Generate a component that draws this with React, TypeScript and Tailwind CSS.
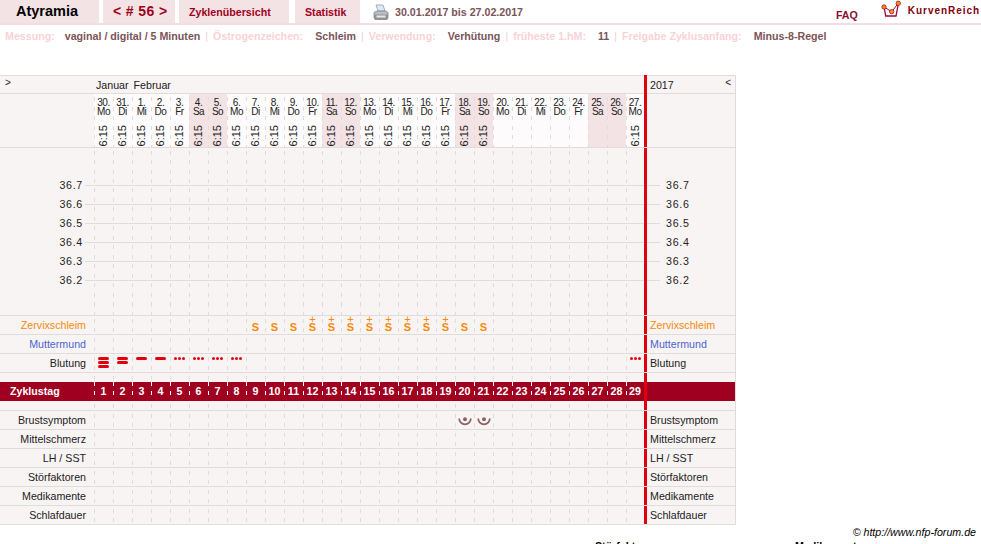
const DAYS = [
  "30.|Mo", "31.|Di", "1.|Mi", "2.|Do", "3.|Fr", "4.|Sa", "5.|So", "6.|Mo", "7.|Di", "8.|Mi",
  "9.|Do", "10.|Fr", "11.|Sa", "12.|So", "13.|Mo", "14.|Di", "15.|Mi", "16.|Do", "17.|Fr", "18.|Sa",
  "19.|So", "20.|Mo", "21.|Di", "22.|Mi", "23.|Do", "24.|Fr", "25.|Sa", "26.|So", "27.|Mo",
];
const INDEXES = DAYS.map((_, i) => i);
const TEMPS = ["36.7", "36.6", "36.5", "36.4", "36.3", "36.2"];

const dash =
  "bg-[repeating-linear-gradient(to_bottom,transparent_0,transparent_3px,#dddddd_3px,#dddddd_7px,transparent_7px,transparent_9.5px)] bg-[size:1px_100%] bg-no-repeat";
const dashWhite =
  "bg-[repeating-linear-gradient(to_bottom,#ffffff_0,#ffffff_4px,transparent_4px,transparent_9.5px)] bg-[size:1px_100%] bg-no-repeat";

function Cell({ i, className = "", children }: { i: number; className?: string; children?: React.ReactNode }) {
  return <div className={`${i === 28 ? "w-[18px]" : "w-[19px]"} h-full shrink-0 ${className}`}>{children}</div>;
}

function Row({
  height,
  label,
  labelClass = "text-[#222222]",
  right,
  cell,
}: {
  height: string;
  label?: string;
  labelClass?: string;
  right?: string;
  cell?: (i: number) => React.ReactNode;
}) {
  return (
    <div className={`flex ${height} border-b border-[#e0dcdc]`}>
      <div className={`w-[94px] shrink-0 pr-[8px] text-right leading-[18px] ${labelClass}`}>{label}</div>
      {INDEXES.map((i) => (
        <Cell key={i} i={i} className={dash}>
          {cell?.(i)}
        </Cell>
      ))}
      <div className={`w-[3px] shrink-0 bg-[#e00010]`} />
      <div className={`w-[88px] shrink-0 pl-[3px] leading-[18px] ${labelClass}`}>{right}</div>
    </div>
  );
}

function Printer() {
  return (
    <svg width="16" height="17" viewBox="0 0 16 17" className="shrink-0">
      <path d="M3 1h7l2 6H5z" fill="#dfe8f0" stroke="#8fa0b0" strokeWidth="0.8" />
      <path d="M1 8.5 4 7h8.5L15 8.5V14H1z" fill="#b9bec4" stroke="#7d8389" strokeWidth="0.8" />
      <path d="M1 10.5h14V14.5l-1 1.5H2l-1-1.5z" fill="#8e949a" />
      <rect x="3.5" y="11.5" width="9" height="2" fill="#e8eaec" />
    </svg>
  );
}

function Logo() {
  return (
    <svg width="20" height="20" viewBox="0 0 20 20" className="shrink-0">
      <path d="M4 18.5h1M9 18.5h1M14 18.5h1" stroke="#dddddd" strokeWidth="1" />
      <path d="M3.3 8 4.7 16H15L17.3 4" fill="none" stroke="#a00040" strokeWidth="1.3" />
      <path d="M3 7 10.7 11.7 17.3 3.3" fill="none" stroke="#a00040" strokeWidth="1" />
      <circle cx="3" cy="7" r="2.2" fill="#f0901a" stroke="#a00020" strokeWidth="0.7" />
      <circle cx="10.7" cy="11.7" r="2.2" fill="#f0901a" stroke="#a00020" strokeWidth="0.7" />
      <circle cx="17.3" cy="3.3" r="2.2" fill="#f0901a" stroke="#a00020" strokeWidth="0.7" />
    </svg>
  );
}

function Breast() {
  return (
    <svg width="14" height="10" viewBox="0 0 14 10" className="mx-auto mt-[5px]">
      <path d="M1.2 2.5a5.8 5.8 0 0 0 11.6 0" fill="none" stroke="#8a6262" strokeWidth="1.8" />
      <circle cx="7" cy="3.2" r="2" fill="#8a6262" />
    </svg>
  );
}

function Mucus({ plus }: { plus?: boolean }) {
  return (
    <div className="relative h-full text-center text-[#f58a0b]">
      {plus && <span className="absolute left-0 right-0 top-0 text-[11px] leading-[6px]">+</span>}
      <span className="absolute left-0 right-0 top-[6px] text-[11px] font-bold leading-[10px]">S</span>
    </div>
  );
}

function Bleeding({ i }: { i: number }) {
  if (i > 7 && i !== 28) return null;
  if (i >= 4) {
    return (
      <div className="flex justify-center gap-px pt-[3px]">
        <div className="h-[3px] w-[3px] rounded-full bg-[#e00010]" />
        <div className="h-[3px] w-[3px] rounded-full bg-[#e00010]" />
        <div className="h-[3px] w-[3px] rounded-full bg-[#e00010]" />
      </div>
    );
  }
  const count = i === 0 ? 3 : i === 1 ? 2 : 1;
  return (
    <div className="flex flex-col items-center gap-px pt-[3px]">
      {INDEXES.slice(0, count).map((n) => (
        <div key={n} className="h-[3px] w-[11px] rounded-full bg-[#e00010]" />
      ))}
    </div>
  );
}

function DayCell({ i }: { i: number }) {
  const [num, name] = DAYS[i].split("|");
  const weekend = name === "Sa" || name === "So";
  const hasTime = i <= 20 || i === 28;
  return (
    <Cell i={i} className={`${dash} ${weekend ? "bg-[#f3e3e5]" : "bg-[#fdfbfb]"} text-center text-[10px] tracking-[-0.5px]`}>
      <div className="flex h-full flex-col items-center pt-[4px] leading-[9px]">
        <span>{num}</span>
        <span>{name}</span>
        {hasTime && (
          <span className="mt-[9px] rotate-180 text-[11px] leading-[13px] tracking-normal [writing-mode:vertical-rl]">6:15</span>
        )}
      </div>
    </Cell>
  );
}

function TempRow({ value }: { value: string }) {
  return (
    <div className="flex h-[19px] items-center">
      <div className="flex w-[94px] shrink-0 items-center justify-end">
        <span className="pb-[2px] tracking-[0.7px]">{value}</span>
        <div className="ml-[2px] h-px w-[9px] bg-[#dddddd]" />
      </div>
      {INDEXES.map((i) => (
        <Cell key={i} i={i} className={`${dash} flex items-center`}>
          <div className="h-px w-full bg-[#dddddd]" />
        </Cell>
      ))}
      <div className="h-full w-[3px] shrink-0 bg-[#e00010]" />
      <div className="flex w-[88px] shrink-0 items-center">
        <div className="h-px w-[13px] bg-[#dddddd]" />
        <span className="ml-[6px] pb-[2px] tracking-[0.7px]">{value}</span>
      </div>
    </div>
  );
}

function Meta({ label, value, first }: { label: string; value: string; first?: boolean }) {
  return (
    <>
      {!first && <span className="mx-[5px] font-normal text-[#f5cfd2]">|</span>}
      <span className="text-[#f8d3d6]">{label}</span>
      <span className={`${first ? "ml-[10px]" : "ml-[12px]"} text-[#7a5458]`}>{value}</span>
    </>
  );
}

export default function App() {
  return (
    <div className="h-[544px] w-[981px] overflow-hidden bg-white font-['Liberation_Sans',Arial,sans-serif] text-[10.67px] text-[#222222]">
      <div className="flex h-[25px] items-start border-b-2 border-[#f3dfe1]">
        <div className="flex h-[23px] w-[99px] items-center bg-[#f3e3e5] pl-[16px] text-[14.5px] font-bold text-black">Atyramia</div>
        <div className="ml-[4px] flex h-[23px] w-[72px] items-center bg-[#f3e3e5] pl-[10px] text-[14px] font-bold tracking-[0.4px] text-[#a00020]">
          &lt; # 56 &gt;
        </div>
        <div className="ml-[4px] flex h-[23px] w-[110px] items-center bg-[#f3e3e5] pl-[10px] font-bold text-[#a00020]">Zyklenübersicht</div>
        <div className="ml-[6px] flex h-[23px] w-[65px] items-center bg-[#f3e3e5] pl-[10px] font-bold text-[#a00020]">Statistik</div>
        <div className="ml-[13px] mt-[4px]">
          <Printer />
        </div>
        <div className="ml-[6px] mt-[4px] font-bold text-[#7a5458]">30.01.2017 bis 27.02.2017</div>
        <div className="ml-auto mt-[7px] font-bold text-[#8a1030]">FAQ</div>
        <div className="ml-[23px]">
          <Logo />
        </div>
        <div className="ml-[7px] mr-px mt-[3px] text-[10px] font-bold tracking-[0.95px] text-[#800010]">KurvenReich</div>
      </div>

      <div className="flex h-[50px] items-start whitespace-pre pl-[5px] pt-[4px] font-bold leading-[14px]">
        <Meta first label="Messung:" value="vaginal / digital / 5 Minuten" />
        <Meta label="Östrogenzeichen:" value="Schleim" />
        <Meta label="Verwendung:" value="Verhütung" />
        <Meta label="früheste 1.hM:" value="11" />
        <Meta label="Freigabe Zyklusanfang:" value="Minus-8-Regel" />
      </div>

      <div className="w-[736px] border-r border-[#e0dcdc] bg-[#f9f4f4]">
        <div className="flex h-[19px]">
          <div className="flex w-[644px] shrink-0 border-y border-[#e0dcdc]">
            <div className="w-[96px] shrink-0 pl-[5px] pt-px text-[10px] leading-[12px]">&gt;</div>
            <span className="pt-px leading-[17px]">Januar</span>
            <span className="ml-[5px] pt-px leading-[17px]">Februar</span>
          </div>
          <div className="w-[3px] shrink-0 bg-[#e00010]" />
          <div className="flex w-[88px] shrink-0 justify-between border-y border-[#e0dcdc] pl-[3px] pr-[4px]">
            <span className="pt-px leading-[17px]">2017</span>
            <span className="pt-px text-[10px] leading-[12px]">&lt;</span>
          </div>
        </div>

        <div className="flex h-[54px] border-b border-[#e0dcdc]">
          <div className="w-[94px] shrink-0" />
          {INDEXES.map((i) => (
            <DayCell key={i} i={i} />
          ))}
          <div className="w-[3px] shrink-0 bg-[#e00010]" />
          <div className="w-[88px] shrink-0" />
        </div>

        <Row height="h-[28px] !border-b-0" />
        {TEMPS.map((t) => (
          <TempRow key={t} value={t} />
        ))}
        <Row height="h-[26px]" />

        <Row
          height="h-[19px]"
          label="Zervixschleim"
          labelClass="text-[#f58a0b]"
          right="Zervixschleim"
          cell={(i) => (i >= 8 && i <= 20 ? <Mucus plus={i >= 11 && i <= 18} /> : null)}
        />
        <Row height="h-[19px]" label="Muttermund" labelClass="text-[#4a66cc]" right="Muttermund" />
        <Row height="h-[19px]" label="Blutung" right="Blutung" cell={(i) => <Bleeding i={i} />} />
        <Row height="h-[9px] !border-b-0" />

        <div className="flex h-[19px] bg-[#a00020] font-bold leading-[19px] text-white">
          <div className="w-[94px] shrink-0 pl-[10px]">Zyklustag</div>
          {INDEXES.map((i) => (
            <Cell key={i} i={i} className={`${dashWhite} text-center`}>
              {i + 1}
            </Cell>
          ))}
          <div className="w-[3px] shrink-0 bg-[#e00010]" />
          <div className="w-[88px] shrink-0" />
        </div>

        <Row height="h-[10px]" />
        <Row height="h-[19px]" label="Brustsymptom" right="Brustsymptom" cell={(i) => (i === 19 || i === 20 ? <Breast /> : null)} />
        <Row height="h-[19px]" label="Mittelschmerz" right="Mittelschmerz" />
        <Row height="h-[19px]" label="LH / SST" right="LH / SST" />
        <Row height="h-[19px]" label="Störfaktoren" right="Störfaktoren" />
        <Row height="h-[19px]" label="Medikamente" right="Medikamente" />
        <Row height="h-[19px]" label="Schlafdauer" right="Schlafdauer" />
      </div>

      <div className="h-[14px] pr-[5px] text-right italic leading-[14px] text-black">© http://www.nfp-forum.de</div>
      <div className="flex pl-[595px] font-bold leading-[14px] text-black">
        <span className="w-[200px]">Störfaktoren</span>
        <span>Medikamente</span>
      </div>
    </div>
  );
}
